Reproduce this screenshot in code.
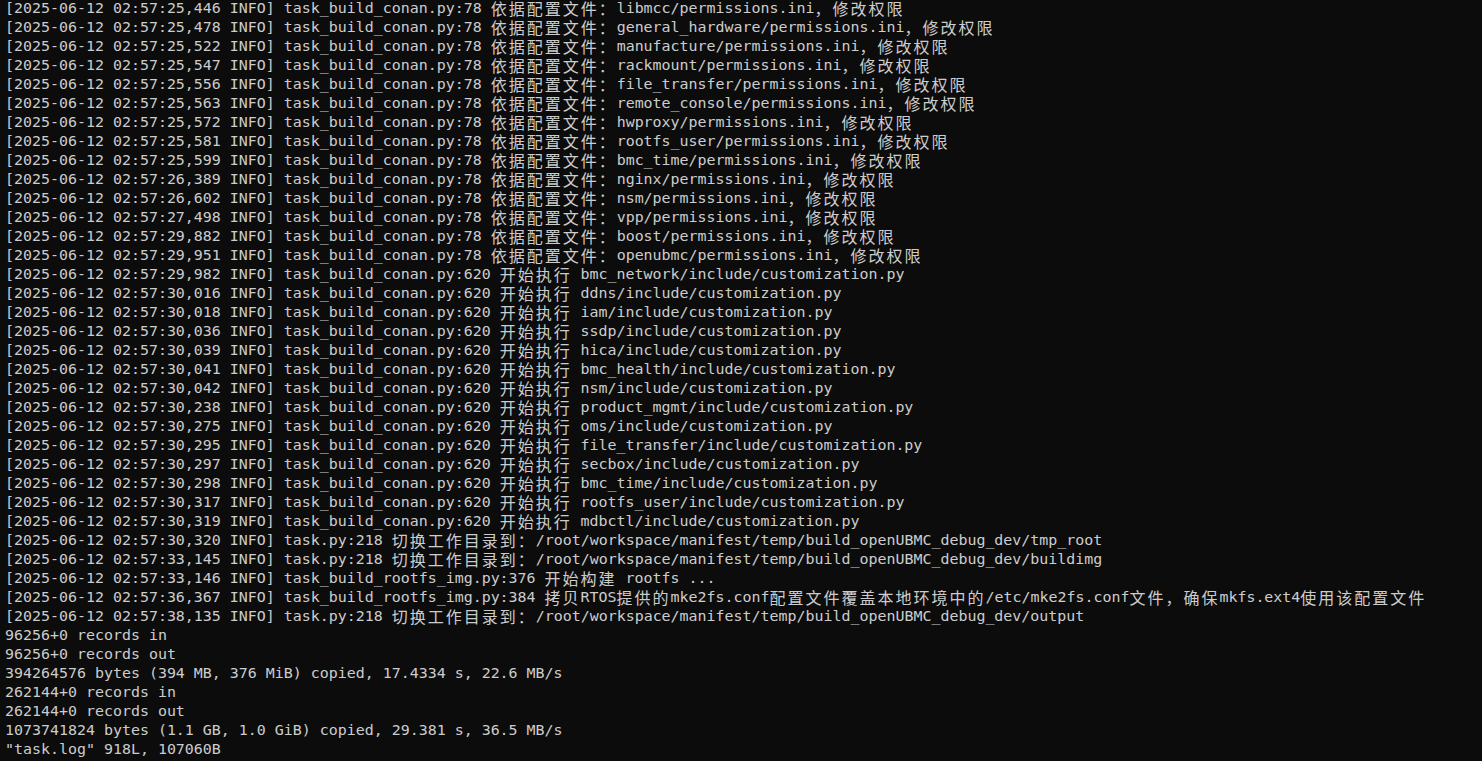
import React from "react";

const perm: [string, string][] = [
  ["25,446", "libmcc"],
  ["25,478", "general_hardware"],
  ["25,522", "manufacture"],
  ["25,547", "rackmount"],
  ["25,556", "file_transfer"],
  ["25,563", "remote_console"],
  ["25,572", "hwproxy"],
  ["25,581", "rootfs_user"],
  ["25,599", "bmc_time"],
  ["26,389", "nginx"],
  ["26,602", "nsm"],
  ["27,498", "vpp"],
  ["29,882", "boost"],
  ["29,951", "openubmc"],
];

const cust: [string, string][] = [
  ["29,982", "bmc_network"],
  ["30,016", "ddns"],
  ["30,018", "iam"],
  ["30,036", "ssdp"],
  ["30,039", "hica"],
  ["30,041", "bmc_health"],
  ["30,042", "nsm"],
  ["30,238", "product_mgmt"],
  ["30,275", "oms"],
  ["30,295", "file_transfer"],
  ["30,297", "secbox"],
  ["30,298", "bmc_time"],
  ["30,317", "rootfs_user"],
  ["30,319", "mdbctl"],
];

const pre = (t: string) => `[2025-06-12 02:57:${t} INFO] `;

const lines: string[] = [
  ...perm.map(([t, m]) => `${pre(t)}task_build_conan.py:78 依据配置文件：${m}/permissions.ini，修改权限`),
  ...cust.map(([t, m]) => `${pre(t)}task_build_conan.py:620 开始执行 ${m}/include/customization.py`),
  `${pre("30,320")}task.py:218 切换工作目录到：/root/workspace/manifest/temp/build_openUBMC_debug_dev/tmp_root`,
  `${pre("33,145")}task.py:218 切换工作目录到：/root/workspace/manifest/temp/build_openUBMC_debug_dev/buildimg`,
  `${pre("33,146")}task_build_rootfs_img.py:376 开始构建 rootfs ...`,
  `${pre("36,367")}task_build_rootfs_img.py:384 拷贝RTOS提供的mke2fs.conf配置文件覆盖本地环境中的/etc/mke2fs.conf文件，确保mkfs.ext4使用该配置文件`,
  `${pre("38,135")}task.py:218 切换工作目录到：/root/workspace/manifest/temp/build_openUBMC_debug_dev/output`,
  "96256+0 records in",
  "96256+0 records out",
  "394264576 bytes (394 MB, 376 MiB) copied, 17.4334 s, 22.6 MB/s",
  "262144+0 records in",
  "262144+0 records out",
  "1073741824 bytes (1.1 GB, 1.0 GiB) copied, 29.381 s, 36.5 MB/s",
  '"task.log" 918L, 107060B',
];

const isWide = (c: string) => c.charCodeAt(0) >= 0x2e80;

function Line({ text }: { text: string }) {
  const parts: React.ReactNode[] = [];
  let buf = "";
  let k = 0;
  for (const ch of text) {
    if (isWide(ch)) {
      if (buf) {
        parts.push(<span key={k++}>{buf}</span>);
        buf = "";
      }
      parts.push(
        <span
          key={k++}
          className="inline-block w-[18px] text-[16px] font-['Noto_Sans_CJK_SC',sans-serif] leading-[19px] align-top"
        >
          {ch}
        </span>
      );
    } else {
      buf += ch;
    }
  }
  if (buf) parts.push(<span key={k++}>{buf}</span>);
  return <div className="h-[19px] whitespace-pre">{parts}</div>;
}

export default function App() {
  return (
    <div className="w-[1482px] h-[761px] overflow-hidden bg-[#0c0c0c] text-[#cccccc]">
      <div className="mt-[-1px] pl-[5px] font-['DejaVu_Sans_Mono','Liberation_Mono',monospace] text-[14.95px] leading-[19px]">
        {lines.map((l, i) => (
          <Line key={i} text={l} />
        ))}
      </div>
    </div>
  );
}
